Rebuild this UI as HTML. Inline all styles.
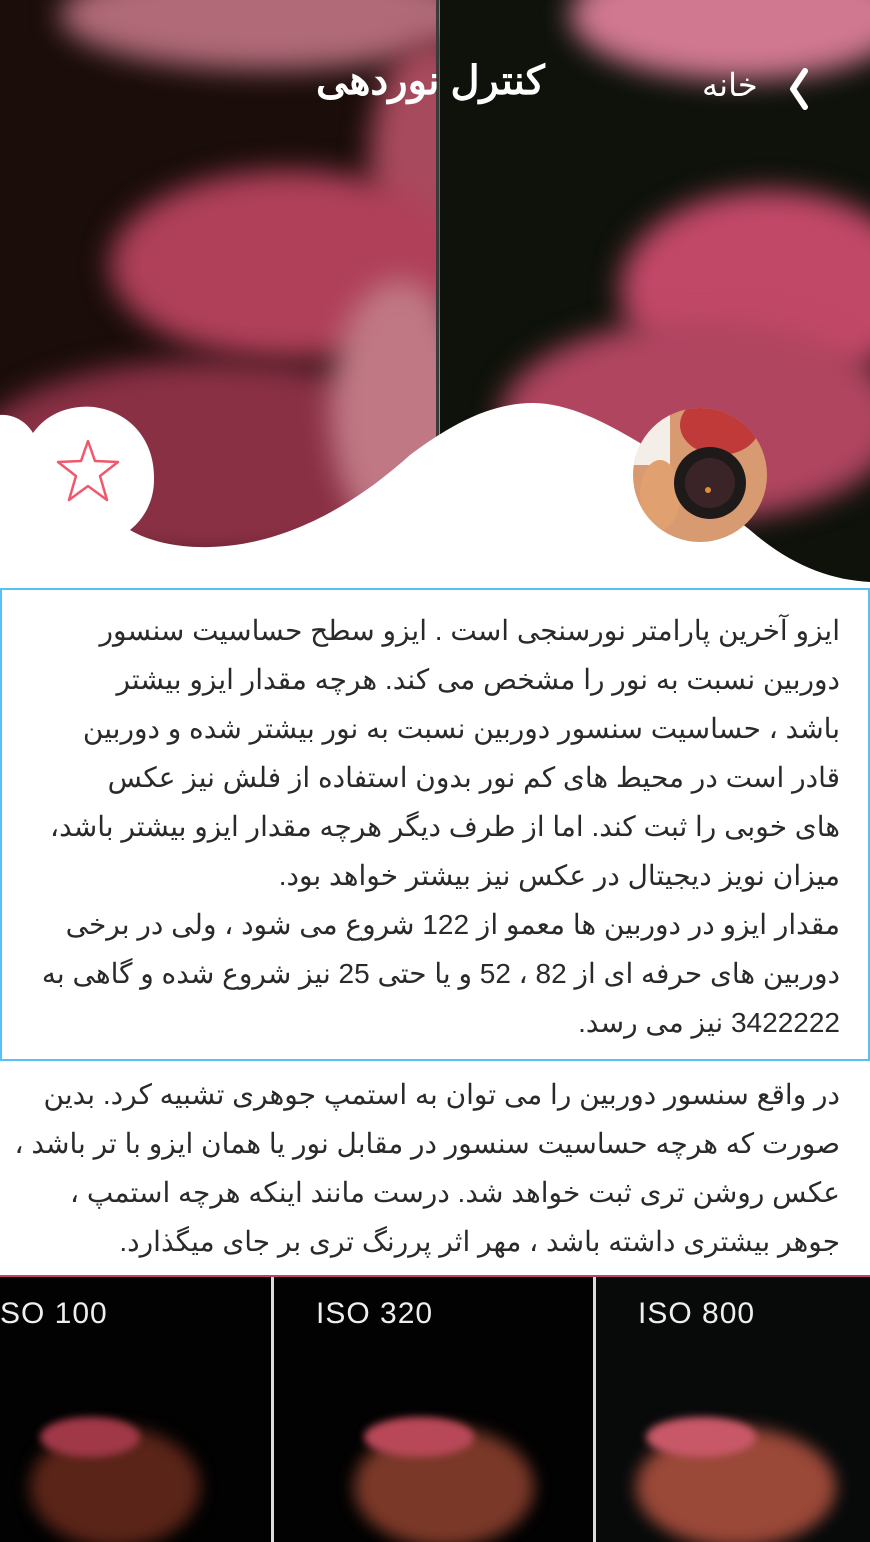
<!DOCTYPE html>
<html><head><meta charset="utf-8"><style>
*{margin:0;padding:0;box-sizing:border-box}
body{width:870px;height:1542px;overflow:hidden;background:#fff;font-family:"Liberation Sans","Noto Sans CJK SC",sans-serif;position:relative}
.hero{position:absolute;left:0;top:0;width:870px;height:590px;overflow:hidden;background:#140a08}
.blob{position:absolute;border-radius:50%;filter:blur(14px)}
.txt{position:absolute;left:0;width:870px;direction:rtl;text-align:right;color:#2a2a2a;font-size:28px;line-height:49px;padding-right:30px;white-space:nowrap}
.box{position:absolute;left:0;top:588px;width:870px;height:473px;border:2.5px solid #55c2f5}
.panel{position:absolute;top:1277px;height:265px;background:#020202;overflow:hidden}
.iso{position:absolute;top:20px;color:#eee;font-size:30px;letter-spacing:1px}
</style></head><body>
<div class="hero">
 <div style="position:absolute;left:0;top:0;width:437px;height:590px;background:#1a0d0a"></div>
 <div class="blob" style="left:60px;top:-40px;width:420px;height:110px;background:#b06a78"></div>
 <div class="blob" style="left:370px;top:40px;width:120px;height:240px;background:#a84a5e"></div>
 <div class="blob" style="left:110px;top:170px;width:360px;height:190px;background:#b0405a"></div>
 <div class="blob" style="left:-30px;top:360px;width:480px;height:200px;background:#8a3045"></div>
 <div class="blob" style="left:330px;top:280px;width:140px;height:260px;background:#c07885"></div>
 <div style="position:absolute;left:440px;top:0;width:430px;height:590px;background:#0e120a;overflow:hidden">
  <div class="blob" style="left:130px;top:-50px;width:340px;height:130px;background:#d07890"></div>
  <div class="blob" style="left:180px;top:190px;width:300px;height:200px;background:#c24868"></div>
  <div class="blob" style="left:60px;top:320px;width:400px;height:200px;background:#b04560"></div>
 </div>
 <div style="position:absolute;left:436px;top:0;width:3px;height:590px;background:#3a3a3a"></div>
 <svg width="870" height="590" style="position:absolute;left:0;top:0">
  <path d="M0 415 C15 414 27 423 33 433 C48 412 72 405 94 407 C130 412 155 440 154 480 C154 500 145 518 130 530 C150 542 180 548 210 547 C290 545 360 500 410 455 C450 425 490 403 533 403 C570 403 610 425 640 443 L750 530 C790 565 830 580 870 582 L870 590 L0 590 Z" fill="#fff"/>
  <path d="M88 441 L95 461 L118 462 L100 476 L107 500 L88 486 L69 500 L76 476 L58 462 L81 461 Z" fill="none" stroke="#f0586c" stroke-width="2.5" stroke-linejoin="round"/>
  <clipPath id="av"><circle cx="700" cy="475" r="67"/></clipPath>
  <g clip-path="url(#av)">
   <rect x="630" y="405" width="140" height="140" fill="#d89a70"/>
   <rect x="630" y="405" width="40" height="60" fill="#f4eee8"/>
   <ellipse cx="720" cy="425" rx="40" ry="30" fill="#c03a3a"/>
   <ellipse cx="660" cy="495" rx="20" ry="35" fill="#e0a070"/>
   <circle cx="710" cy="483" r="36" fill="#1e1a1a"/>
   <circle cx="710" cy="483" r="25" fill="#3a2428"/>
   <circle cx="708" cy="490" r="3" fill="#e09030"/>
  </g>
 </svg>
 <div style="position:absolute;left:316px;top:58px;color:#fff;font-size:40px;font-weight:bold">کنترل نوردهی</div>
 <div style="position:absolute;left:702px;top:66px;color:#fff;font-size:32px">خانه</div>
 <svg width="30" height="50" style="position:absolute;left:785px;top:65px"><path d="M20 6 L8 24 L20 42" fill="none" stroke="#fff" stroke-width="6" stroke-linecap="round" stroke-linejoin="round"/></svg>
</div>
<div class="box"></div>
<div class="txt" style="top:606px">ایزو آخرین پارامتر نورسنجی است . ایزو سطح حساسیت سنسور<br>دوربین نسبت به نور را مشخص می کند. هرچه مقدار ایزو بیشتر<br>باشد ، حساسیت سنسور دوربین نسبت به نور بیشتر شده و دوربین&nbsp;<br>قادر است در محیط  های کم نور بدون استفاده از فلش نیز عکس&nbsp;<br>های خوبی را ثبت کند. اما از طرف دیگر هرچه مقدار ایزو بیشتر باشد،<br>میزان نویز دیجیتال در عکس نیز بیشتر خواهد بود.<br>مقدار ایزو در دوربین ها معمو  از 122 شروع می شود ، ولی در برخی<br>دوربین های حرفه ای از 82 ، 52 و یا حتی 25 نیز شروع شده و گاهی به<br>3422222 نیز می رسد.</div>
<div class="txt" style="top:1070px">در واقع سنسور دوربین را می توان به استمپ جوهری تشبیه کرد. بدین<br>صورت که هرچه حساسیت سنسور در مقابل نور یا همان ایزو با تر باشد ،<br>عکس روشن تری ثبت خواهد شد. درست مانند اینکه هرچه استمپ ،<br>جوهر بیشتری داشته باشد ، مهر اثر پررنگ تری بر جای میگذارد.</div>
<div style="position:absolute;left:0;top:1275px;width:870px;height:2px;background:#c04070"></div>
<div class="panel" style="left:0;width:271px"><div class="iso" style="left:0">SO 100</div>
 <div class="blob" style="left:30px;top:150px;width:170px;height:120px;background:#5a2418;filter:blur(8px)"></div>
 <div class="blob" style="left:40px;top:140px;width:100px;height:40px;background:#a03848;filter:blur(4px)"></div></div>
<div style="position:absolute;left:271px;top:1277px;width:3px;height:265px;background:#ddd"></div>
<div class="panel" style="left:274px;width:319px"><div class="iso" style="left:42px">ISO 320</div>
 <div class="blob" style="left:80px;top:150px;width:180px;height:120px;background:#7a3828;filter:blur(8px)"></div>
 <div class="blob" style="left:90px;top:140px;width:110px;height:40px;background:#b84858;filter:blur(4px)"></div></div>
<div style="position:absolute;left:593px;top:1277px;width:3px;height:265px;background:#ddd"></div>
<div class="panel" style="left:596px;width:274px;background:#080a0a"><div class="iso" style="left:42px">ISO 800</div>
 <div class="blob" style="left:40px;top:150px;width:200px;height:120px;background:#9a4838;filter:blur(8px)"></div>
 <div class="blob" style="left:50px;top:140px;width:110px;height:40px;background:#c85868;filter:blur(4px)"></div></div>
</body></html>
